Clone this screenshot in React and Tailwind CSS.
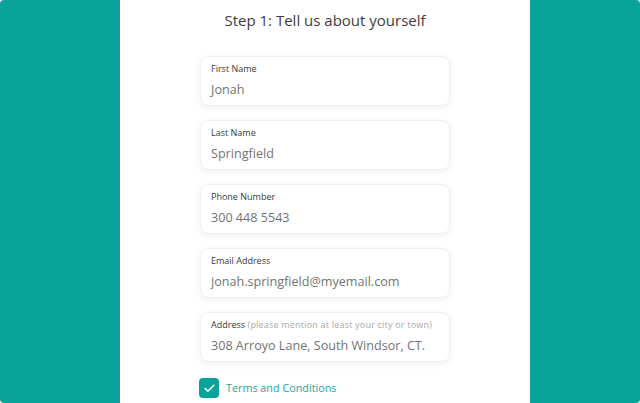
import { Check } from 'lucide-react';

const fields = [
  { label: 'First Name', value: 'Jonah' },
  { label: 'Last Name', value: 'Springfield' },
  { label: 'Phone Number', value: '300 448 5543' },
  { label: 'Email Address', value: 'jonah.springfield@myemail.com' },
  { label: 'Address', hint: '(please mention at least your city or town)', value: '308 Arroyo Lane, South Windsor, CT.' },
];

const Field = ({ label, hint, value }) => (
  <div className="w-[250px] h-[50px] rounded-lg border border-[#f0f0f0] bg-white shadow-[0_2px_8px_rgba(0,0,0,0.06)] px-[10px] pt-[6px]">
    <div className="text-[9px] leading-[12px] text-[#3a3a3a]">
      {label}
      {hint && <span className="text-[#a8a8a8] tracking-[0.2px]"> {hint}</span>}
    </div>
    <div className="mt-[7px] text-[12.6px] leading-[16px] text-[#737373]">{value}</div>
  </div>
);

const App = () => {
  return (
    <div className="w-[640px] h-[403px] bg-white">
      <div className="flex h-full rounded-[4px] overflow-hidden" style={{ fontFamily: "'Open Sans', 'Liberation Sans', sans-serif" }}>
        <div className="w-[120px] bg-[#09a39a]" />
        <div className="flex-1 bg-white flex flex-col items-center">
          <h1 className="mt-[10px] text-[15px] leading-[20px] text-[#3d3d3d]">Step 1: Tell us about yourself</h1>
          <div className="mt-[26px] flex flex-col gap-[14px]">
            {fields.map(f => <Field key={f.label} {...f} />)}
          </div>
          <div className="w-[252px] mt-[16px] flex items-center gap-[7px]">
            <div className="w-[20px] h-[20px] rounded-[4px] bg-[#09a39a] flex items-center justify-center">
              <Check className="w-[13px] h-[13px] text-white" strokeWidth={3} />
            </div>
            <span className="text-[10.8px] font-medium text-[#17a89f]">Terms and Conditions</span>
          </div>
        </div>
        <div className="w-[110px] bg-[#09a39a]" />
      </div>
    </div>
  );
};

export default App;
